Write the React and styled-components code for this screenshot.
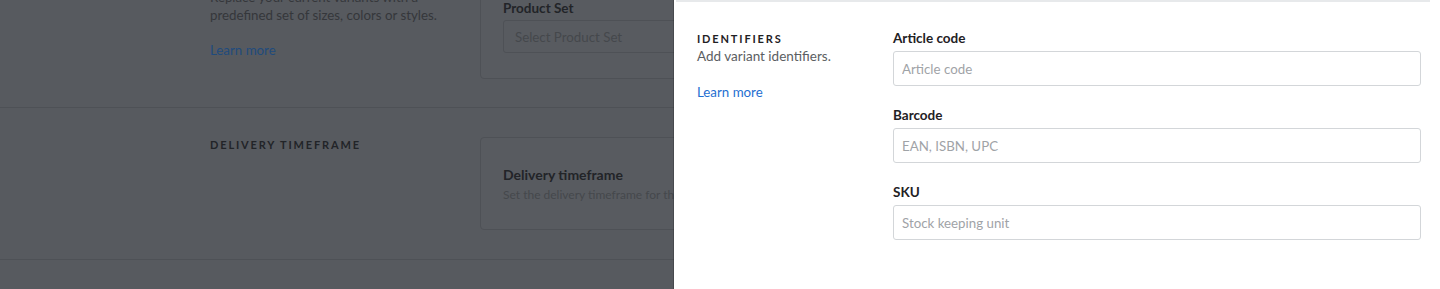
import styled, { createGlobalStyle } from "styled-components";

const GlobalStyle = createGlobalStyle`
  html, body {
    margin: 0;
    padding: 0;
    background: #ffffff;
  }
  body {
    font-family: Lato, "Open Sans", sans-serif;
    -webkit-font-smoothing: antialiased;
  }
  * {
    box-sizing: border-box;
  }
`;

const dim = {
  bg: "#575a5f",
  card: "#585b60",
  line: "#4e5156",
  strong: "#222428",
  text: "#35373b",
  muted: "#45484c",
  link: "#1f4b7d",
};

export default function App() {
  return (
    <>
      <GlobalStyle />
      <Screen>
        <Backdrop>
          <PageScroll>
            <Section>
              <SideInfo $offset={14}>
                <Description $dim>
                  Replace your current variants with a predefined set of sizes, colors or styles.
                </Description>
                <LearnMore $dim>Learn more</LearnMore>
              </SideInfo>
              <Card>
                <DimLabel>Product Set</DimLabel>
                <DimSelect>Select Product Set</DimSelect>
              </Card>
            </Section>

            <Section>
              <SideInfo>
                <Heading $dim>Delivery timeframe</Heading>
              </SideInfo>
              <Card $tall>
                <CardTitle>Delivery timeframe</CardTitle>
                <CardText>Set the delivery timeframe for this variant.</CardText>
              </Card>
            </Section>
          </PageScroll>
        </Backdrop>

        <Drawer>
          <DrawerRule />
          <DrawerBody>
            <SideInfo $offset={1}>
              <Heading>Identifiers</Heading>
              <Description>Add variant identifiers.</Description>
              <LearnMore>Learn more</LearnMore>
            </SideInfo>
            <Fields>
              <Field>
                <Label htmlFor="article-code">Article code</Label>
                <Input id="article-code" placeholder="Article code" />
              </Field>
              <Field>
                <Label htmlFor="barcode">Barcode</Label>
                <Input id="barcode" placeholder="EAN, ISBN, UPC" />
              </Field>
              <Field>
                <Label htmlFor="sku">SKU</Label>
                <Input id="sku" placeholder="Stock keeping unit" />
              </Field>
            </Fields>
          </DrawerBody>
        </Drawer>
      </Screen>
    </>
  );
}

const Screen = styled.div`
  width: 1440px;
  height: 289px;
  display: flex;
  overflow: hidden;
`;

const Backdrop = styled.div`
  width: 674px;
  flex-shrink: 0;
  height: 100%;
  overflow: hidden;
  background-color: ${dim.bg};
`;

// the page behind the drawer is scrolled a little
const PageScroll = styled.div`
  margin-top: -32px;
`;

const Section = styled.div`
  display: grid;
  grid-template-columns: 271px 480px;
  align-items: start;
  padding: 29px 0 29px 210px;
  border-bottom: 1px solid ${dim.line};

  &:first-child {
    padding-top: 6px;
    padding-bottom: 28px;
  }
`;

const SideInfo = styled.div`
  display: flex;
  flex-direction: column;
  align-items: flex-start;
  margin-top: ${(p) => p.$offset || 0}px;
`;

const Heading = styled.h3`
  margin: 0;
  font-size: 11px;
  line-height: 16px;
  font-weight: 700;
  letter-spacing: 1.85px;
  text-transform: uppercase;
  color: ${(p) => (p.$dim ? dim.strong : "#1f2124")};
`;

const Description = styled.p`
  margin: 0;
  font-size: ${(p) => (p.$dim ? "13.3px" : "13.5px")};
  line-height: ${(p) => (p.$dim ? "18px" : "19px")};
  max-width: ${(p) => (p.$dim ? "240px" : "none")};
  color: ${(p) => (p.$dim ? dim.text : "#5b5e62")};
`;

const LearnMore = styled.a`
  margin-top: ${(p) => (p.$dim ? "17px" : "17px")};
  font-size: 13.3px;
  line-height: 18px;
  color: ${(p) => (p.$dim ? dim.link : "#1f6fd1")};
  text-decoration: none;
  cursor: pointer;
`;

const Card = styled.div`
  width: 480px;
  height: ${(p) => (p.$tall ? "93px" : "auto")};
  display: flex;
  flex-direction: column;
  padding: ${(p) => (p.$tall ? "27px 23px 0 22px" : "24px 23px 25px 22px")};
  margin-left: -1px;
  background-color: ${dim.card};
  border: 1px solid ${dim.line};
  border-radius: 4px;
`;

const DimLabel = styled.div`
  font-size: 13.5px;
  line-height: 18px;
  font-weight: 700;
  color: ${dim.strong};
  margin-bottom: 3px;
`;

const DimSelect = styled.div`
  height: 33px;
  display: flex;
  align-items: center;
  padding: 0 11px;
  font-size: 13.3px;
  color: ${dim.muted};
  border: 1px solid ${dim.line};
  border-radius: 3px;
`;

const CardTitle = styled.div`
  font-size: 14px;
  line-height: 20px;
  font-weight: 700;
  color: ${dim.strong};
`;

const CardText = styled.div`
  margin-top: 2px;
  font-size: 12px;
  line-height: 16px;
  white-space: nowrap;
  color: ${dim.muted};
`;

const Drawer = styled.div`
  flex: 1;
  height: 100%;
  display: flex;
  flex-direction: column;
  background-color: #ffffff;
  box-shadow: -1px 0 0 rgba(0, 0, 0, 0.18);
`;

const DrawerRule = styled.div`
  height: 2px;
  margin: 0 10px 0 2px;
  background-color: #e7e9eb;
`;

const DrawerBody = styled.div`
  display: grid;
  grid-template-columns: 196px 1fr;
  align-items: start;
  padding: 28px 19px 0 23px;
`;

const Fields = styled.div`
  display: flex;
  flex-direction: column;
  gap: 21px;
`;

const Field = styled.div`
  display: flex;
  flex-direction: column;
  gap: 5px;
`;

const Label = styled.label`
  font-size: 13.5px;
  line-height: 16px;
  font-weight: 700;
  color: #1f2124;
`;

const Input = styled.input`
  height: 35px;
  width: 100%;
  padding: 0 8px;
  font-family: Lato, "Open Sans", sans-serif;
  font-size: 13.3px;
  color: #1f2124;
  background: #ffffff;
  border: 1px solid #d3d6d9;
  border-radius: 3px;
  outline: none;

  &::placeholder {
    color: #9fa3a7;
  }
`;
